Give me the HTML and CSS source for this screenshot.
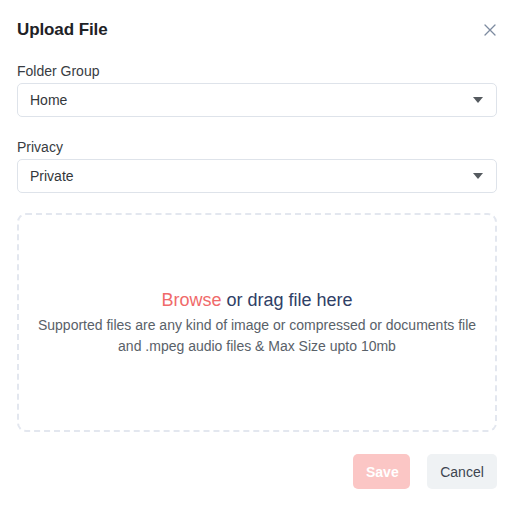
FILE: index.html
```html
<!DOCTYPE html>
<html>
<head>
<meta charset="utf-8">
<link rel="stylesheet" href="styles.css">
</head>
<body>
<div class="modal">
  <div class="header">
    <h1 class="title">Upload File</h1>
    <button class="close" aria-label="Close">
      <svg width="12" height="12" viewBox="0 0 12 12"><path d="M1 1L11 11M11 1L1 11" stroke="#7d8ba0" stroke-width="1.3" stroke-linecap="round"/></svg>
    </button>
  </div>
  <div class="field">
    <label class="label">Folder Group</label>
    <div class="select"><span>Home</span><span class="caret"></span></div>
  </div>
  <div class="field field-last">
    <label class="label">Privacy</label>
    <div class="select"><span>Private</span><span class="caret"></span></div>
  </div>
  <div class="drop">
    <div class="drop-title"><span class="browse">Browse</span> or drag file here</div>
    <div class="drop-desc">Supported files are any kind of image or compressed or documents file<br>and .mpeg audio files &amp; Max Size upto 10mb</div>
  </div>
  <div class="actions">
    <button class="btn save">Save</button>
    <button class="btn cancel">Cancel</button>
  </div>
</div>
</body>
</html>
```
FILE: styles.css
```css
* { box-sizing: border-box; }
html, body { margin: 0; padding: 0; background: #fff; }
body { font-family: "Liberation Sans", Arial, sans-serif; color: #212529; }
.modal { width: 514px; padding: 19px 17px 0 17px; }
.header { display: flex; justify-content: space-between; align-items: center; height: 22px; margin-bottom: 22px; }
.title { margin: 0; font-size: 17px; font-weight: 600; color: #1e2226; letter-spacing: -0.1px; }
.close { border: 0; background: none; padding: 0; margin-right: 1px; width: 12px; height: 12px; display: flex; }
.field { margin-bottom: 22px; }
.field-last { margin-bottom: 20px; }
.label { display: block; font-size: 14px; color: #383c42; margin-bottom: 3px; line-height: 17px; }
.select { height: 34px; border: 1px solid #dee3ea; border-radius: 5px; display: flex; align-items: center; justify-content: space-between; padding: 0 13px 0 12px; font-size: 14px; color: #33373b; }
.caret { width: 0; height: 0; border-left: 5px solid transparent; border-right: 5px solid transparent; border-top: 6px solid #555a5f; }
.drop { height: 219px; border: 2px dashed #e3e7ef; border-radius: 9px; display: flex; flex-direction: column; align-items: center; justify-content: center; text-align: center; padding-top: 1px; }
.drop-title { font-size: 18px; color: #2f4066; margin-bottom: 4px; line-height: 22px; }
.browse { color: #f06a6a; }
.drop-desc { font-size: 14px; color: #596169; line-height: 21px; }
.actions { display: flex; justify-content: flex-end; gap: 17px; margin-top: 22px; }
.btn { height: 35px; border: 0; border-radius: 5px; font-family: inherit; font-size: 14px; padding: 0 13px; }
.save { background: #fbc6c5; color: #fff; width: 57px; font-weight: 600; }
.cancel { background: #eff2f4; color: #3d4550; width: 70px; }
```
